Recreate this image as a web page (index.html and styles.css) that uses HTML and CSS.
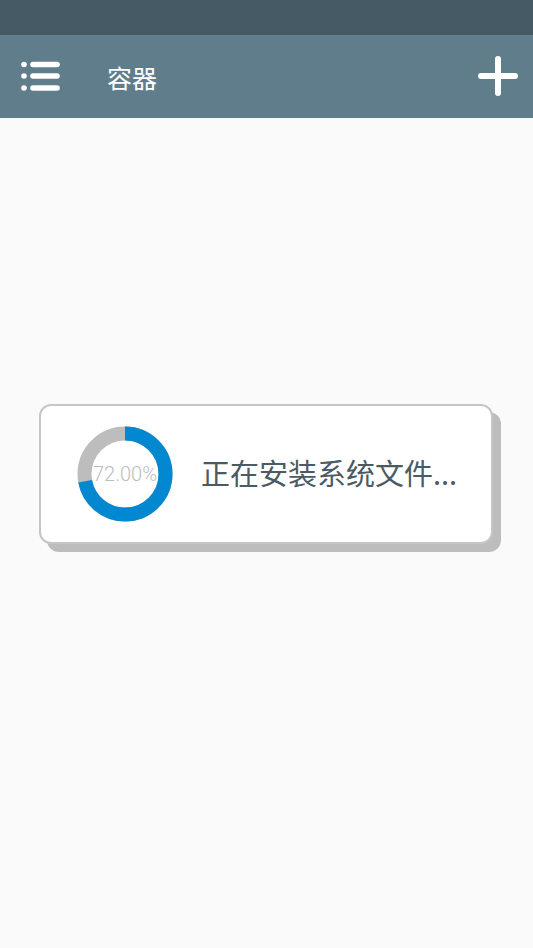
FILE: index.html
```html
<!DOCTYPE html>
<html lang="zh">
<head>
    <meta charset="UTF-8">
    <meta name="viewport" content="width=device-width, initial-scale=1.0">
    <title>容器</title>
    <link rel="stylesheet" href="styles.css">
</head>
<body>
    <div class="status-bar"></div>
    <div class="toolbar">
        <svg class="menu-icon" width="40" height="34" viewBox="0 0 40 34">
            <circle cx="3" cy="3.5" r="2.8" fill="#fff"/>
            <circle cx="3" cy="15" r="2.8" fill="#fff"/>
            <circle cx="3" cy="27" r="2.8" fill="#fff"/>
            <line x1="12" y1="3.5" x2="36" y2="3.5" stroke="#fff" stroke-width="5.6" stroke-linecap="round"/>
            <line x1="12" y1="15" x2="36" y2="15" stroke="#fff" stroke-width="5.6" stroke-linecap="round"/>
            <line x1="12" y1="27" x2="36" y2="27" stroke="#fff" stroke-width="5.6" stroke-linecap="round"/>
        </svg>
        <h1 class="title">容器</h1>
        <svg class="add-icon" width="40" height="40" viewBox="0 0 40 40">
            <line x1="3" y1="20" x2="37" y2="20" stroke="#fff" stroke-width="6" stroke-linecap="round"/>
            <line x1="20" y1="3" x2="20" y2="37" stroke="#fff" stroke-width="6" stroke-linecap="round"/>
        </svg>
    </div>

    <div class="content">
        <div class="dialog">
            <svg class="ring" width="96" height="96" viewBox="0 0 96 96">
                <circle cx="48" cy="48" r="40.5" fill="none" stroke="#bdbdbd" stroke-width="14"/>
                <circle cx="48" cy="48" r="40.5" fill="none" stroke="#0288d1" stroke-width="14"
                        stroke-dasharray="183.2 300" transform="rotate(-90 48 48)"/>
                <text x="48" y="55" text-anchor="middle" class="percent">72.00%</text>
            </svg>
            <p class="message">正在安装系统文件...</p>
        </div>
    </div>
</body>
</html>
```

FILE: styles.css
```css
body {
    margin: 0;
    height: 948px;
    background-color: #fafafa;
    font-family: Roboto, "Noto Sans CJK SC", sans-serif;
    overflow: hidden;
}

.status-bar {
    height: 35px;
    background-color: #465a65;
}

.toolbar {
    height: 83px;
    background-color: #607d8b;
    display: flex;
    align-items: center;
    padding: 0 15px 0 21px;
}

.menu-icon {
    margin-top: 2px;
}

.title {
    margin: 0 0 0 46px;
    flex: 1;
    font-family: "Noto Sans CJK SC", sans-serif;
    font-size: 25px;
    font-weight: normal;
    color: #fff;
}

.add-icon {
    margin-bottom: 1px;
}

.content {
    padding: 286px 0 0 39px;
}

.dialog {
    width: 414px;
    height: 136px;
    border: 2px solid #c6c6c6;
    border-radius: 12px;
    background-color: #fff;
    box-shadow: 8px 8px 0 #bdbdbd;
    display: flex;
    align-items: center;
    padding-left: 36px;
}

.ring {
    flex-shrink: 0;
}

.percent {
    font-family: Roboto, sans-serif;
    font-size: 20px;
    font-weight: 300;
    fill: #bdbdbd;
}

.message {
    margin: 0 0 4px 28px;
    font-family: "Noto Sans CJK SC", sans-serif;
    font-size: 29px;
    color: #4a5b64;
    white-space: nowrap;
}
```
